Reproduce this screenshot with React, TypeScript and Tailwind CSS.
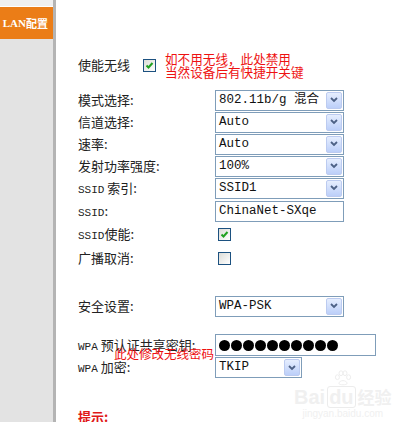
const cjk = { fontFamily: '"Noto Sans CJK SC", "Liberation Sans", sans-serif' }

function Latin({ children }: { children: React.ReactNode }) {
  return <span className="font-['Liberation_Mono',monospace] text-[11px]">{children}</span>
}

function Checkbox({ checked }: { checked?: boolean }) {
  return (
    <div className="relative h-[13px] w-[13px] shrink-0 border border-[#1c5180] bg-gradient-to-br from-[#dcdcd7] to-[#ffffff]">
      {checked && (
        <svg viewBox="0 0 11 11" className="absolute inset-0 h-[11px] w-[11px]">
          <path d="M2.5 5.5 L4.5 7.5 L8.5 3" fill="none" stroke="#21a121" strokeWidth="2" />
        </svg>
      )}
    </div>
  )
}

function Select({ value, width }: { value: string; width: string }) {
  return (
    <div
      className={`relative flex h-[21px] ${width} items-center border border-[#7f9db9] bg-white pl-[3px] text-[12.5px] text-[#111]`}
      style={{ fontFamily: '"Liberation Mono", "Noto Sans CJK SC", monospace' }}
    >
      {value}
      <div className="absolute right-px top-px bottom-px flex w-[16px] items-center justify-center rounded-[2px] border border-[#bccbf0] bg-gradient-to-b from-[#e6eefe] to-[#bccff9]">
        <svg viewBox="0 0 8 6" className="h-[6px] w-[8px]">
          <path d="M1 1 L4 4 L7 1" fill="none" stroke="#4d6185" strokeWidth="1.8" />
        </svg>
      </div>
    </div>
  )
}

function Row({ label, children, h = 'h-[22px]' }: { label: React.ReactNode; children: React.ReactNode; h?: string }) {
  return (
    <div className={`flex ${h} items-center`}>
      <div className="w-[137px] shrink-0 text-[13px] text-[#222]">{label}</div>
      {children}
    </div>
  )
}

export default function App() {
  return (
    <div className="relative flex h-[422px] w-[411px] overflow-hidden bg-white" style={cjk}>
      <div className="flex w-[56px] shrink-0 flex-col border-r-[3px] border-[#b4b4b4] bg-[#e3e3e3]">
        <div className="h-[6px] bg-[#efefef]" />
        <div className="h-[1px] bg-white" />
        <div className="flex h-[32px] items-center justify-end bg-[#eb7d17] pr-[5px] text-[11px] font-bold text-white whitespace-nowrap overflow-hidden">
          <span className="font-['Liberation_Serif',serif]">LAN</span>配置
        </div>
      </div>

      <div className="relative flex-1 pl-[22px]">
        <div className="mt-[52px] flex h-[26px] items-center">
          <div className="w-[65px] text-[13px] text-[#222]">使能无线</div>
          <Checkbox checked />
          <div className="ml-[9px] text-[12.6px] leading-[13px] text-[#ee1111]">
            <div>如不用无线，此处禁用</div>
            <div>当然设备后有快捷开关键</div>
          </div>
        </div>

        <div className="mt-[11px]">
          <Row label="模式选择:">
            <Select value="802.11b/g 混合" width="w-[129px]" />
          </Row>
          <Row label="信道选择:">
            <Select value="Auto" width="w-[129px]" />
          </Row>
          <Row label="速率:">
            <Select value="Auto" width="w-[129px]" />
          </Row>
          <Row label="发射功率强度:">
            <Select value="100%" width="w-[129px]" />
          </Row>
          <Row label={<><Latin>SSID</Latin> 索引:</>}>
            <Select value="SSID1" width="w-[129px]" />
          </Row>
          <Row label={<><Latin>SSID</Latin>:</>} h="h-[24px]">
            <div className="flex h-[21px] w-[129px] items-center border border-[#7f9db9] bg-white pl-[3px] font-['Liberation_Mono',monospace] text-[12.5px] text-[#111]">
              ChinaNet-SXqe
            </div>
          </Row>
          <Row label={<><Latin>SSID</Latin>使能:</>}>
            <div className="pl-[3px]"><Checkbox checked /></div>
          </Row>
          <Row label="广播取消:" h="h-[26px]">
            <div className="pl-[3px]"><Checkbox /></div>
          </Row>
        </div>

        <div className="mt-[24px]">
          <Row label="安全设置:">
            <Select value="WPA-PSK" width="w-[129px]" />
          </Row>
        </div>

        <div className="mt-[17px]">
          <Row label={<><Latin>WPA</Latin> 预认证共享密钥:</>}>
            <div className="flex h-[22px] w-[161px] items-center gap-px border border-[#7f9db9] bg-white pl-[3px]">
              {Array.from({ length: 10 }).map((_, i) => (
                <span key={i} className="h-[11px] w-[11px] rounded-full bg-black" />
              ))}
            </div>
          </Row>
          <Row label={<><Latin>WPA</Latin> 加密:</>} h="h-[23px]">
            <Select value="TKIP" width="w-[87px]" />
          </Row>
        </div>

        <div className="mt-[28px] text-[13px] font-bold text-[#e01818]">提示:</div>

        <div className="absolute left-[58px] top-[347px] text-[12.5px] leading-[14px] text-[#ee1111]">
          此处修改无线密码
        </div>

        <div className="absolute left-[238px] top-[370px] flex flex-col items-center text-[#f0f0f0]">
          <svg viewBox="0 0 24 20" className="h-[16px] w-[22px]">
            <g fill="none" stroke="#ececec" strokeWidth="1.2">
              <ellipse cx="5" cy="9" rx="2.5" ry="3" />
              <ellipse cx="9.5" cy="4" rx="2.5" ry="3" />
              <ellipse cx="14.5" cy="4" rx="2.5" ry="3" />
              <ellipse cx="19" cy="9" rx="2.5" ry="3" />
              <path d="M7 17 C7 12 17 12 17 17 C17 19 7 19 7 17 Z" />
            </g>
          </svg>
          <div className="flex items-center whitespace-nowrap text-[20px] font-bold leading-[20px] font-['Liberation_Sans',sans-serif]">
            Bai<span className="mx-[2px] rounded-[3px] border border-[#ececec] px-[1px]">du</span>
            <span className="text-[17px]" style={cjk}>经验</span>
          </div>
          <div className="text-[10px] leading-[12px] font-['Liberation_Sans',sans-serif]">jingyan.baidu.com</div>
        </div>
      </div>
    </div>
  )
}
